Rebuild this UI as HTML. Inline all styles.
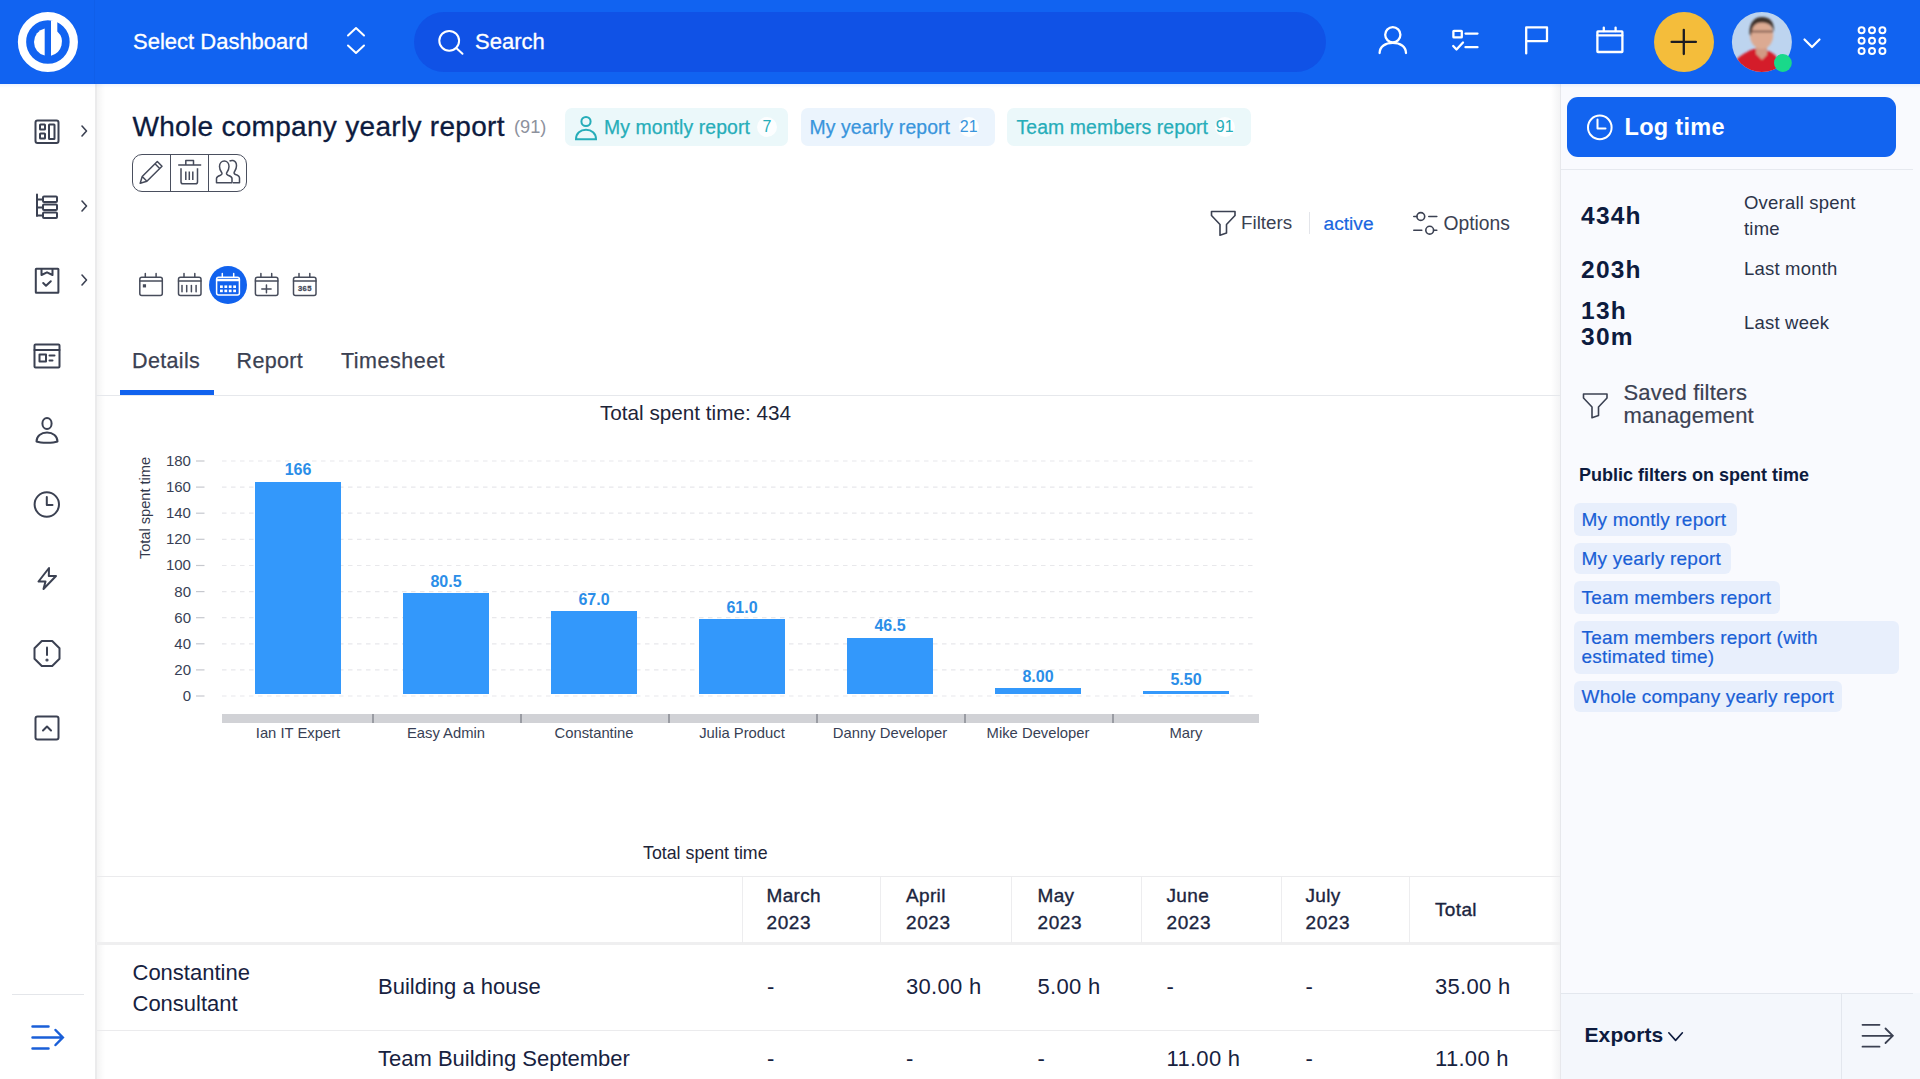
<!DOCTYPE html>
<html><head><meta charset="utf-8"><style>
html,body{margin:0;padding:0;width:1920px;height:1079px;overflow:hidden;background:#fff;}
body{position:relative;font-family:"Liberation Sans", sans-serif;}
.t{position:absolute;white-space:nowrap;}
.r{position:absolute;}
</style></head><body>
<div class="r" style="left:0px;top:0px;width:1920px;height:1079px;background:#ffffff;"></div>
<div class="r" style="left:1561px;top:84px;width:359px;height:995px;background:#f9fafe;"></div>
<div class="r" style="left:1559.5px;top:84px;width:1.5px;height:995px;background:#e7e8ec;"></div>
<div class="r" style="left:1551px;top:84px;width:8.5px;height:995px;background:linear-gradient(to right, rgba(0,0,0,0), rgba(20,30,60,0.05));"></div>
<div class="r" style="left:95px;top:84px;width:2px;height:995px;background:#ebebec;"></div>
<div class="r" style="left:97px;top:84px;width:8px;height:995px;background:linear-gradient(to right, rgba(0,0,0,0.045), rgba(0,0,0,0));"></div>
<div class="r" style="left:0px;top:84px;width:1920px;height:4px;background:linear-gradient(rgba(17,99,241,0.07), rgba(17,99,241,0));"></div>
<div class="r" style="left:0px;top:0px;width:1920px;height:84px;background:#1163f1;"></div>
<div class="r" style="left:94px;top:0px;width:1px;height:84px;background:rgba(0,0,0,0.03);"></div>
<svg class="r" style="left:0px;top:0px;" width="95" height="84" viewBox="0 0 95 84" fill="none">
<circle cx="47.9" cy="42" r="25.9" stroke="#fff" stroke-width="8.3"/>
<path d="M44.7 28.4 A14 14 0 0 0 44.7 55.6 Z" fill="#fff"/>
<path d="M51 20.5 H57.3 V31.6 A14 14 0 0 1 51 55.65 Z" fill="#fff"/>
</svg>
<div class="t" style="left:133.0px;top:31.3px;font-size:22px;line-height:22px;color:#ffffff;font-weight:normal;-webkit-text-stroke:0.3px #ffffff;">Select Dashboard</div>
<svg class="r" style="left:340px;top:20px;" width="32" height="40" viewBox="0 0 32 40" fill="none">
<path d="M348 35.5 L356 28 L364 35.5" transform="translate(-340,-20)" stroke="#fff" stroke-width="2" stroke-linecap="round" stroke-linejoin="round"/>
<path d="M348 45.5 L356 53 L364 45.5" transform="translate(-340,-20)" stroke="#fff" stroke-width="2" stroke-linecap="round" stroke-linejoin="round"/>
</svg>
<div class="r" style="left:414px;top:12px;width:912px;height:60px;background:#1052e6;border-radius:30px;"></div>
<svg class="r" style="left:430px;top:20px;" width="45" height="45" viewBox="0 0 45 45" fill="none">
<g transform="translate(-430,-20)">
<circle cx="449.2" cy="40.8" r="9.9" stroke="#fff" stroke-width="2"/>
<path d="M456.5 48.2 L462.5 53.8" stroke="#fff" stroke-width="2" stroke-linecap="round"/>
</g></svg>
<div class="t" style="left:475.0px;top:31.3px;font-size:22px;line-height:22px;color:#ffffff;font-weight:normal;-webkit-text-stroke:0.3px #ffffff;">Search</div>
<svg class="r" style="left:1370px;top:15px;" width="270" height="55" viewBox="0 0 270 55" fill="none">
<g transform="translate(-1370,-15)" stroke="#fff" stroke-width="2.3" fill="none" stroke-linecap="round" stroke-linejoin="round">
<circle cx="1392.8" cy="34.8" r="7.6"/>
<path d="M1379.6 53 C1379.6 46.5 1385.5 42.8 1392.8 42.8 C1400.1 42.8 1406 46.5 1406 53"/>
<rect x="1453.4" y="30.8" width="8.4" height="6.6" rx="0.5"/>
<path d="M1465.5 33.6 H1477.5 M1465.5 47.2 H1477.5 M1453.2 46 L1456.5 49.5 L1463 42.5"/>
<path d="M1526.2 53.4 V27.4 H1547 V41.2 H1526.2"/>
<rect x="1597.4" y="31.4" width="25" height="20.6" rx="0.5"/>
<path d="M1597.6 35.4 H1622.2 M1603.8 27.6 V31 M1615.6 27.6 V31"/>
</g></svg>
<div class="r" style="left:1653.8px;top:11.9px;width:60px;height:60px;border-radius:50%;background:#f4bd3b;"></div>
<svg class="r" style="left:1660px;top:18px;" width="48" height="48" viewBox="0 0 48 48" fill="none">
<g transform="translate(-1660,-18)" stroke="#1b1b22" stroke-width="2.3" stroke-linecap="round">
<path d="M1683.8 29.8 V54 M1671.6 41.9 H1695.9"/>
</g></svg>
<svg class="r" style="left:1725px;top:5px;" width="75" height="75" viewBox="0 0 75 75" fill="none"><defs><clipPath id="avc"><circle cx="36.9" cy="37" r="30"/></clipPath><filter id="avb" x="-20%" y="-20%" width="140%" height="140%"><feGaussianBlur stdDeviation="1.1"/></filter></defs>
<circle cx="36.9" cy="37" r="30" fill="#bdd4ef"/>
<g clip-path="url(#avc)"><g filter="url(#avb)">
<path d="M8 75 L12 54 C18 48 27 44 33 43 L41 45 C46 47 50 49 52 53 L54 75 Z" fill="#d41a2a"/>
<path d="M31 40 H42 V50 L37 55 L31 49 Z" fill="#d29a84"/>
<ellipse cx="36.6" cy="30" rx="11.6" ry="14" fill="#dcaa92"/>
<path d="M24.5 29 C24 18 29 12 37 12 C45 12 49.5 17 49 27 C47 21 44 17.5 37 17.5 C30 17.5 27 21 26 31 Z" fill="#3d302a"/>
<path d="M26 26.5 H48" stroke="#6b4a40" stroke-width="1.6"/>
</g></g>
<circle cx="57.9" cy="58" r="8.9" fill="#19d98a"/></svg>
<svg class="r" style="left:1800px;top:30px;" width="26" height="26" viewBox="0 0 26 26" fill="none"><path d="M4.5 9.5 L12 17 L19.5 9.5" stroke="#fff" stroke-width="2.2" stroke-linecap="round" stroke-linejoin="round"/></svg>
<svg class="r" style="left:1850px;top:20px;" width="45" height="45" viewBox="0 0 45 45" fill="none"><circle cx="11.6" cy="10.3" r="3.0" stroke="#fff" stroke-width="2.0"/><circle cx="22.0" cy="10.3" r="3.0" stroke="#fff" stroke-width="2.0"/><circle cx="32.4" cy="10.3" r="3.0" stroke="#fff" stroke-width="2.0"/><circle cx="11.6" cy="20.7" r="3.0" stroke="#fff" stroke-width="2.0"/><circle cx="22.0" cy="20.7" r="3.0" stroke="#fff" stroke-width="2.0"/><circle cx="32.4" cy="20.7" r="3.0" stroke="#fff" stroke-width="2.0"/><circle cx="11.6" cy="31.1" r="3.0" stroke="#fff" stroke-width="2.0"/><circle cx="22.0" cy="31.1" r="3.0" stroke="#fff" stroke-width="2.0"/><circle cx="32.4" cy="31.1" r="3.0" stroke="#fff" stroke-width="2.0"/></svg>
<svg class="r" style="left:0px;top:84px;" width="95" height="995" viewBox="0 0 95 995" fill="none"><g transform="translate(0,-84)"><g stroke="#3b4152" stroke-width="2" fill="none" stroke-linecap="round" stroke-linejoin="round"><rect x="35.5" y="120.5" width="23" height="22.5" rx="2"/><rect x="40" y="124.5" width="5" height="5" rx="0.5"/><rect x="40" y="133.5" width="5" height="5" rx="0.5"/><rect x="49" y="124.5" width="5.5" height="14.5" rx="0.5"/><path d="M37 194.5 V216 M37 199.5 H43 M37 207.5 H43 M37 215.5 H43"/><rect x="43" y="196.5" width="14" height="5.5" rx="1"/><rect x="43" y="204.5" width="14" height="5.5" rx="1"/><rect x="43" y="212.5" width="14" height="5.5" rx="1"/><rect x="35.8" y="268.8" width="22.6" height="24" rx="0.5"/><path d="M41.5 269 V275 L47 272.3 L52.5 275 V269"/><path d="M43.2 283 L46 285.8 L50.8 281.2"/><rect x="34.5" y="344.5" width="25" height="23" rx="1"/><path d="M34.5 350 H59.5"/><rect x="39.5" y="354.5" width="6.5" height="7"/><path d="M49.5 355.5 H54.5 M49.5 360.5 H52.5"/><ellipse cx="47" cy="423.5" rx="4.6" ry="5.5"/><path d="M36.5 441.5 C36.5 436 41 432.5 47 432.5 C53 432.5 57.5 436 57.5 441.5 C53 443.2 41 443.2 36.5 441.5 Z"/><circle cx="46.8" cy="504.5" r="12.2"/><path d="M46.8 497 V505 H52.5"/><path d="M49 568 L38.5 581.5 H45.5 L43.5 589 L56 576 H48.8 Z"/><path d="M41.8 641 H52.2 L59.5 648.3 V658.7 L52.2 666 H41.8 L34.5 658.7 V648.3 Z"/><path d="M47 647.5 V655"/><circle cx="47" cy="660" r="0.6" fill="#3b4152"/><rect x="35.5" y="716.5" width="23" height="23" rx="2"/><path d="M43 730.5 L47 726.5 L51 730.5"/><path d="M82 126 L86.5 131 L82 136" stroke-width="1.6"/><path d="M82 201 L86.5 206 L82 211" stroke-width="1.6"/><path d="M82 275 L86.5 280 L82 285" stroke-width="1.6"/></g></g></svg>
<div class="r" style="left:12px;top:994px;width:72px;height:1px;background:#e4e6ea;"></div>
<svg class="r" style="left:25px;top:1015px;" width="45" height="45" viewBox="0 0 45 45" fill="none"><g transform="translate(-25,-1015)" stroke="#1a5fd8" stroke-width="2.5" stroke-linecap="round" fill="none"><path d="M32.5 1026.5 H48.5 M32.5 1048.5 H48.5 M32.5 1037.5 H62.5 M55.5 1030 L62.8 1037.5 L55.5 1045"/></g></svg>
<div class="t" style="left:132.5px;top:112.8px;font-size:28px;line-height:28px;color:#0d1b3e;font-weight:normal;letter-spacing:0.3px;-webkit-text-stroke:0.3px #0d1b3e;">Whole company yearly report</div>
<div class="t" style="left:514.0px;top:117.5px;font-size:18.2px;line-height:18.2px;color:#8d919d;font-weight:normal;">(91)</div>
<div class="r" style="left:565px;top:108px;width:223px;height:38px;background:#ebf8fa;border-radius:7px;"></div>
<div class="t" style="left:604.0px;top:117.5px;font-size:19.4px;line-height:19.4px;color:#26adb9;font-weight:normal;letter-spacing:0.1px;-webkit-text-stroke:0.25px #26adb9;">My montly report</div>
<div class="r" style="left:757px;top:117px;width:20px;height:20px;border-radius:10px;background:#fff;opacity:.85"></div>
<div class="t" style="left:762.4px;top:119.4px;font-size:16px;line-height:16px;color:#26adb9;font-weight:normal;">7</div>
<svg class="r" style="left:572px;top:112px;" width="30" height="30" viewBox="0 0 30 30" fill="none"><g transform="translate(-572,-112)" stroke="#26adb9" stroke-width="2" fill="none" stroke-linecap="round"><circle cx="586" cy="121.5" r="4.6"/><path d="M576 139.2 C576 133 580.5 129.8 586 129.8 C591.5 129.8 596 133 596 139.2 Z"/></g></svg>
<div class="r" style="left:801px;top:108px;width:194px;height:38px;background:#ebf4fd;border-radius:7px;"></div>
<div class="t" style="left:809.5px;top:117.5px;font-size:19.4px;line-height:19.4px;color:#3995dc;font-weight:normal;letter-spacing:0.1px;-webkit-text-stroke:0.25px #3995dc;">My yearly report</div>
<div class="r" style="left:959px;top:117px;width:20px;height:20px;border-radius:10px;background:#fff;opacity:.85"></div>
<div class="t" style="left:959.8px;top:119.4px;font-size:16px;line-height:16px;color:#3995dc;font-weight:normal;">21</div>
<div class="r" style="left:1007px;top:108px;width:244px;height:38px;background:#ebf8fa;border-radius:7px;"></div>
<div class="t" style="left:1016.5px;top:117.5px;font-size:19.4px;line-height:19.4px;color:#26adb9;font-weight:normal;letter-spacing:0.1px;-webkit-text-stroke:0.25px #26adb9;">Team members report</div>
<div class="r" style="left:1215px;top:117px;width:20px;height:20px;border-radius:10px;background:#fff;opacity:.85"></div>
<div class="t" style="left:1215.8px;top:119.4px;font-size:16px;line-height:16px;color:#26adb9;font-weight:normal;">91</div>
<div class="r" style="left:132px;top:154px;width:113px;height:36px;border:1.4px solid #4a4f5e;border-radius:10px;"></div>
<div class="r" style="left:169.5px;top:154px;width:1.4px;height:38px;background:#4a4f5e;"></div>
<div class="r" style="left:208px;top:154px;width:1.4px;height:38px;background:#4a4f5e;"></div>
<svg class="r" style="left:130px;top:150px;" width="120" height="45" viewBox="0 0 120 45" fill="none"><g transform="translate(-130,-150)" stroke="#454a5a" stroke-width="1.5" fill="none" stroke-linejoin="round"><path d="M140.2 183.3 L142.2 176.5 L157.3 161.5 L162 166.2 L146.9 181.2 Z M142.2 176.5 L146.9 181.2 M155 163.8 L159.7 168.5"/><path d="M178.2 165 H201.2 M185.8 165 V160.6 H193.5 V165 M181 168.2 V182 C181 183.2 181.8 183.8 183 183.8 H195.5 C196.8 183.8 197.5 183.2 197.5 182 V168.2 M185.8 171.5 V180 M189.3 171.5 V180 M192.8 171.5 V180"/><path d="M216.5 182.8 V178.5 C216.5 176.8 218 176 220.5 175.2 C222 174.5 222.5 173.8 221.5 172.2 C220.3 170.5 219.5 168.5 219.5 166.5 C219.5 163 221.8 161 224.3 161 C226.8 161 229 163 229 166.5 C229 168.5 228.2 170.5 227 172.2 C226 173.8 226.5 174.5 228 175.2 C230.5 176 232 176.8 232 178.5 V182.8 Z"/><path d="M229.5 161 C231 160.3 232 160.3 233 160.5 C235.2 161 236.5 163 236.5 165.8 C236.5 167.8 235.8 169.8 234.6 171.5 C233.6 173 234 173.8 235.5 174.5 C238 175.3 239.5 176.2 239.5 178 V182.8 H233"/></g></svg>
<svg class="r" style="left:1205px;top:205px;" width="40" height="35" viewBox="0 0 40 35" fill="none"><g transform="translate(-1205,-205)" stroke="#3b4152" stroke-width="1.6" fill="none" stroke-linejoin="round"><path d="M1211.5 211.5 H1235 V215.5 L1226.5 224.5 V233 L1220 235.2 V224.5 L1211.5 215.5 Z"/></g></svg>
<div class="t" style="left:1241.0px;top:214.3px;font-size:18.8px;line-height:18.8px;color:#3b4152;font-weight:normal;">Filters</div>
<div class="r" style="left:1309px;top:212px;width:1.2px;height:22px;background:#e3e5ea;"></div>
<div class="t" style="left:1323.5px;top:214.0px;font-size:19.2px;line-height:19.2px;color:#1a66e0;font-weight:normal;-webkit-text-stroke:0.2px #1a66e0;">active</div>
<svg class="r" style="left:1405px;top:205px;" width="40" height="35" viewBox="0 0 40 35" fill="none"><g transform="translate(-1405,-205)" stroke="#3b4152" stroke-width="1.6" fill="none" stroke-linecap="round"><circle cx="1420.8" cy="216.5" r="3.9"/><path d="M1413.8 216.5 H1416.9 M1428.8 216.5 H1436.8"/><circle cx="1429.7" cy="230.2" r="3.9"/><path d="M1413.8 230.2 H1421.8 M1433.6 230.2 H1436.8"/></g></svg>
<div class="t" style="left:1443.5px;top:213.9px;font-size:19.3px;line-height:19.3px;color:#3b4152;font-weight:normal;">Options</div>
<div class="r" style="left:209.2px;top:266.3px;width:38px;height:38px;border-radius:50%;background:#1162ee;"></div>
<svg class="r" style="left:0px;top:0px;" width="330" height="310" viewBox="0 0 330 310" fill="none"><g stroke="#474c5b" stroke-width="1.5" fill="none" stroke-linecap="round"><rect x="139.8" y="277.3" width="22.5" height="18.1" rx="2"/><path d="M139.8 280.9 H162.3 M145.3 273.6 V277 M156.1 273.6 V277"/><rect x="143.6" y="285" width="1.7" height="1.7" fill="#474c5b"/></g><g stroke="#474c5b" stroke-width="1.5" fill="none" stroke-linecap="round"><rect x="178.5" y="277.3" width="22.5" height="18.1" rx="2"/><path d="M178.5 280.9 H201.0 M184.0 273.6 V277 M194.79999999999998 273.6 V277"/><path d="M182.0 285.5 V291.8"/><path d="M186.7 285.5 V291.8"/><path d="M191.4 285.5 V291.8"/><path d="M196.1 285.5 V291.8"/></g><g stroke="#474c5b" stroke-width="1.5" fill="none" stroke-linecap="round"><rect x="255.4" y="277.3" width="22.5" height="18.1" rx="2"/><path d="M255.4 280.9 H277.9 M260.9 273.6 V277 M271.7 273.6 V277"/><path d="M261.8 288.9 H271.1 M266.45 285 V292.8"/></g><g stroke="#474c5b" stroke-width="1.5" fill="none" stroke-linecap="round"><rect x="293.5" y="277.3" width="22.5" height="18.1" rx="2"/><path d="M293.5 280.9 H316.0 M299.0 273.6 V277 M309.8 273.6 V277"/><text x="304.9" y="291.4" font-family="Liberation Sans" font-weight="bold" font-size="7.6" letter-spacing="0.4" fill="#474c5b" stroke="#474c5b" stroke-width="0.3" text-anchor="middle">365</text></g><g stroke="#fff" stroke-width="1.5" fill="none" stroke-linecap="round"><rect x="216.6" y="277.3" width="22.8" height="17.6" rx="2"/><path d="M216.6 279.6 H239.4 M216.6 280.6 H239.4 M222.3 273.6 V277 M233.7 273.6 V277"/></g><rect x="220.0" y="285.4" width="2.8" height="2.6" fill="#fff"/><rect x="220.0" y="289.6" width="2.8" height="2.6" fill="#fff"/><rect x="224.4" y="285.4" width="2.8" height="2.6" fill="#fff"/><rect x="224.4" y="289.6" width="2.8" height="2.6" fill="#fff"/><rect x="228.8" y="285.4" width="2.8" height="2.6" fill="#fff"/><rect x="228.8" y="289.6" width="2.8" height="2.6" fill="#fff"/><rect x="233.2" y="285.4" width="2.8" height="2.6" fill="#fff"/><rect x="233.2" y="289.6" width="2.8" height="2.6" fill="#fff"/></svg>
<div class="t" style="left:132.0px;top:351.0px;font-size:21.5px;line-height:21.5px;color:#3b4152;font-weight:normal;letter-spacing:0.35px;-webkit-text-stroke:0.25px #3b4152;">Details</div>
<div class="t" style="left:236.5px;top:351.0px;font-size:21.5px;line-height:21.5px;color:#3b4152;font-weight:normal;letter-spacing:0.35px;-webkit-text-stroke:0.25px #3b4152;">Report</div>
<div class="t" style="left:341.0px;top:351.0px;font-size:21.5px;line-height:21.5px;color:#3b4152;font-weight:normal;letter-spacing:0.5px;-webkit-text-stroke:0.25px #3b4152;">Timesheet</div>
<div class="r" style="left:96px;top:394.5px;width:1464px;height:1.3px;background:#e6e8ec;"></div>
<div class="r" style="left:120px;top:390px;width:93.5px;height:4.5px;background:#1162ee;"></div>
<div class="t" style="left:600.0px;top:402.6px;font-size:20.7px;line-height:20.7px;color:#1d2438;font-weight:normal;">Total spent time: 434</div>
<div class="t" style="left:144.5px;top:508px;transform:translate(-50%,-50%) rotate(-90deg);font-size:14.6px;line-height:15px;color:#333a4d;">Total spent time</div>
<div class="t" style="left:182.7px;top:688.0px;font-size:15px;line-height:15px;color:#383f55;font-weight:normal;">0</div>
<div class="t" style="left:174.3px;top:661.8px;font-size:15px;line-height:15px;color:#383f55;font-weight:normal;">20</div>
<div class="t" style="left:174.3px;top:635.7px;font-size:15px;line-height:15px;color:#383f55;font-weight:normal;">40</div>
<div class="t" style="left:174.3px;top:609.6px;font-size:15px;line-height:15px;color:#383f55;font-weight:normal;">60</div>
<div class="t" style="left:174.3px;top:583.5px;font-size:15px;line-height:15px;color:#383f55;font-weight:normal;">80</div>
<div class="t" style="left:165.9px;top:557.4px;font-size:15px;line-height:15px;color:#383f55;font-weight:normal;">100</div>
<div class="t" style="left:165.9px;top:531.3px;font-size:15px;line-height:15px;color:#383f55;font-weight:normal;">120</div>
<div class="t" style="left:165.9px;top:505.2px;font-size:15px;line-height:15px;color:#383f55;font-weight:normal;">140</div>
<div class="t" style="left:165.9px;top:479.1px;font-size:15px;line-height:15px;color:#383f55;font-weight:normal;">160</div>
<div class="t" style="left:165.9px;top:453.0px;font-size:15px;line-height:15px;color:#383f55;font-weight:normal;">180</div>
<svg class="r" style="left:0px;top:0px;" width="1300" height="760" viewBox="0 0 1300 760" fill="none"><path d="M196 696.0 H204.5" stroke="#c6c8ce" stroke-width="1.2"/><path d="M222 696.0 H1256" stroke="#e8e8eb" stroke-width="1.2" stroke-dasharray="4.5 4.5"/><path d="M196 669.9 H204.5" stroke="#c6c8ce" stroke-width="1.2"/><path d="M222 669.9 H1256" stroke="#e8e8eb" stroke-width="1.2" stroke-dasharray="4.5 4.5"/><path d="M196 643.8 H204.5" stroke="#c6c8ce" stroke-width="1.2"/><path d="M222 643.8 H1256" stroke="#e8e8eb" stroke-width="1.2" stroke-dasharray="4.5 4.5"/><path d="M196 617.7 H204.5" stroke="#c6c8ce" stroke-width="1.2"/><path d="M222 617.7 H1256" stroke="#e8e8eb" stroke-width="1.2" stroke-dasharray="4.5 4.5"/><path d="M196 591.6 H204.5" stroke="#c6c8ce" stroke-width="1.2"/><path d="M222 591.6 H1256" stroke="#e8e8eb" stroke-width="1.2" stroke-dasharray="4.5 4.5"/><path d="M196 565.5 H204.5" stroke="#c6c8ce" stroke-width="1.2"/><path d="M222 565.5 H1256" stroke="#e8e8eb" stroke-width="1.2" stroke-dasharray="4.5 4.5"/><path d="M196 539.3 H204.5" stroke="#c6c8ce" stroke-width="1.2"/><path d="M222 539.3 H1256" stroke="#e8e8eb" stroke-width="1.2" stroke-dasharray="4.5 4.5"/><path d="M196 513.2 H204.5" stroke="#c6c8ce" stroke-width="1.2"/><path d="M222 513.2 H1256" stroke="#e8e8eb" stroke-width="1.2" stroke-dasharray="4.5 4.5"/><path d="M196 487.1 H204.5" stroke="#c6c8ce" stroke-width="1.2"/><path d="M222 487.1 H1256" stroke="#e8e8eb" stroke-width="1.2" stroke-dasharray="4.5 4.5"/><path d="M196 461.0 H204.5" stroke="#c6c8ce" stroke-width="1.2"/><path d="M222 461.0 H1256" stroke="#e8e8eb" stroke-width="1.2" stroke-dasharray="4.5 4.5"/></svg>
<div class="r" style="left:222px;top:714.2px;width:1037px;height:9px;background:#d1d2d6;"></div>
<div class="r" style="left:372.20000000000005px;top:714.2px;width:1.5px;height:9.3px;background:#9a9ca3;"></div>
<div class="r" style="left:520.2px;top:714.2px;width:1.5px;height:9.3px;background:#9a9ca3;"></div>
<div class="r" style="left:668.2px;top:714.2px;width:1.5px;height:9.3px;background:#9a9ca3;"></div>
<div class="r" style="left:816.2px;top:714.2px;width:1.5px;height:9.3px;background:#9a9ca3;"></div>
<div class="r" style="left:964.2px;top:714.2px;width:1.5px;height:9.3px;background:#9a9ca3;"></div>
<div class="r" style="left:1112.1999999999998px;top:714.2px;width:1.5px;height:9.3px;background:#9a9ca3;"></div>
<div class="r" style="left:255.2px;top:481.8px;width:85.5px;height:212.2px;background:#3398fb;"></div>
<div class="t" style="left:238.0px;width:120px;text-align:center;top:725.8px;font-size:14.8px;line-height:14.8px;color:#383f55;">Ian IT Expert</div>
<div class="t" style="left:238.0px;width:120px;text-align:center;top:462.4px;font-size:16px;line-height:16px;font-weight:bold;color:#2b8ee8;">166</div>
<div class="r" style="left:403.2px;top:593.4px;width:85.5px;height:100.6px;background:#3398fb;"></div>
<div class="t" style="left:386.0px;width:120px;text-align:center;top:725.8px;font-size:14.8px;line-height:14.8px;color:#383f55;">Easy Admin</div>
<div class="t" style="left:386.0px;width:120px;text-align:center;top:574.0px;font-size:16px;line-height:16px;font-weight:bold;color:#2b8ee8;">80.5</div>
<div class="r" style="left:551.2px;top:611.0px;width:85.5px;height:83.0px;background:#3398fb;"></div>
<div class="t" style="left:534.0px;width:120px;text-align:center;top:725.8px;font-size:14.8px;line-height:14.8px;color:#383f55;">Constantine</div>
<div class="t" style="left:534.0px;width:120px;text-align:center;top:591.6px;font-size:16px;line-height:16px;font-weight:bold;color:#2b8ee8;">67.0</div>
<div class="r" style="left:699.2px;top:618.9px;width:85.5px;height:75.1px;background:#3398fb;"></div>
<div class="t" style="left:682.0px;width:120px;text-align:center;top:725.8px;font-size:14.8px;line-height:14.8px;color:#383f55;">Julia Product</div>
<div class="t" style="left:682.0px;width:120px;text-align:center;top:599.5px;font-size:16px;line-height:16px;font-weight:bold;color:#2b8ee8;">61.0</div>
<div class="r" style="left:847.2px;top:637.8px;width:85.5px;height:56.2px;background:#3398fb;"></div>
<div class="t" style="left:830.0px;width:120px;text-align:center;top:725.8px;font-size:14.8px;line-height:14.8px;color:#383f55;">Danny Developer</div>
<div class="t" style="left:830.0px;width:120px;text-align:center;top:618.4px;font-size:16px;line-height:16px;font-weight:bold;color:#2b8ee8;">46.5</div>
<div class="r" style="left:995.2px;top:688.1px;width:85.5px;height:5.9px;background:#3398fb;"></div>
<div class="t" style="left:978.0px;width:120px;text-align:center;top:725.8px;font-size:14.8px;line-height:14.8px;color:#383f55;">Mike Developer</div>
<div class="t" style="left:978.0px;width:120px;text-align:center;top:668.7px;font-size:16px;line-height:16px;font-weight:bold;color:#2b8ee8;">8.00</div>
<div class="r" style="left:1143.2px;top:691.3px;width:85.5px;height:2.7px;background:#3398fb;"></div>
<div class="t" style="left:1126.0px;width:120px;text-align:center;top:725.8px;font-size:14.8px;line-height:14.8px;color:#383f55;">Mary</div>
<div class="t" style="left:1126.0px;width:120px;text-align:center;top:671.9px;font-size:16px;line-height:16px;font-weight:bold;color:#2b8ee8;">5.50</div>
<div class="t" style="left:643.0px;top:844.5px;font-size:17.8px;line-height:17.8px;color:#1d2438;font-weight:normal;">Total spent time</div>
<div class="r" style="left:96px;top:876px;width:1464px;height:1.2px;background:#ebebed;"></div>
<div class="r" style="left:96px;top:942px;width:1464px;height:2.5px;background:#efeff0;"></div>
<div class="r" style="left:742px;top:877px;width:1.2px;height:66px;background:#ededef;"></div>
<div class="r" style="left:880px;top:877px;width:1.2px;height:66px;background:#ededef;"></div>
<div class="r" style="left:1011px;top:877px;width:1.2px;height:66px;background:#ededef;"></div>
<div class="r" style="left:1141px;top:877px;width:1.2px;height:66px;background:#ededef;"></div>
<div class="r" style="left:1281px;top:877px;width:1.2px;height:66px;background:#ededef;"></div>
<div class="r" style="left:1409px;top:877px;width:1.2px;height:66px;background:#ededef;"></div>
<div class="t" style="left:766.5px;top:886.1px;font-size:19px;line-height:19px;color:#1b2540;font-weight:normal;letter-spacing:0.35px;-webkit-text-stroke:0.35px #1b2540;">March</div>
<div class="t" style="left:766.5px;top:912.8px;font-size:19px;line-height:19px;color:#1b2540;font-weight:normal;letter-spacing:0.6px;-webkit-text-stroke:0.35px #1b2540;">2023</div>
<div class="t" style="left:906.0px;top:886.1px;font-size:19px;line-height:19px;color:#1b2540;font-weight:normal;letter-spacing:0.35px;-webkit-text-stroke:0.35px #1b2540;">April</div>
<div class="t" style="left:906.0px;top:912.8px;font-size:19px;line-height:19px;color:#1b2540;font-weight:normal;letter-spacing:0.6px;-webkit-text-stroke:0.35px #1b2540;">2023</div>
<div class="t" style="left:1037.5px;top:886.1px;font-size:19px;line-height:19px;color:#1b2540;font-weight:normal;letter-spacing:0.35px;-webkit-text-stroke:0.35px #1b2540;">May</div>
<div class="t" style="left:1037.5px;top:912.8px;font-size:19px;line-height:19px;color:#1b2540;font-weight:normal;letter-spacing:0.6px;-webkit-text-stroke:0.35px #1b2540;">2023</div>
<div class="t" style="left:1166.5px;top:886.1px;font-size:19px;line-height:19px;color:#1b2540;font-weight:normal;letter-spacing:0.35px;-webkit-text-stroke:0.35px #1b2540;">June</div>
<div class="t" style="left:1166.5px;top:912.8px;font-size:19px;line-height:19px;color:#1b2540;font-weight:normal;letter-spacing:0.6px;-webkit-text-stroke:0.35px #1b2540;">2023</div>
<div class="t" style="left:1305.5px;top:886.1px;font-size:19px;line-height:19px;color:#1b2540;font-weight:normal;letter-spacing:0.35px;-webkit-text-stroke:0.35px #1b2540;">July</div>
<div class="t" style="left:1305.5px;top:912.8px;font-size:19px;line-height:19px;color:#1b2540;font-weight:normal;letter-spacing:0.6px;-webkit-text-stroke:0.35px #1b2540;">2023</div>
<div class="t" style="left:1435.0px;top:900.1px;font-size:19px;line-height:19px;color:#1b2540;font-weight:normal;letter-spacing:0.35px;-webkit-text-stroke:0.35px #1b2540;">Total</div>
<div class="t" style="left:132.5px;top:961.6px;font-size:22px;line-height:22px;color:#17223f;font-weight:normal;">Constantine</div>
<div class="t" style="left:132.5px;top:992.5px;font-size:22px;line-height:22px;color:#17223f;font-weight:normal;">Consultant</div>
<div class="t" style="left:378.0px;top:975.7px;font-size:22px;line-height:22px;color:#17223f;font-weight:normal;">Building a house</div>
<div class="t" style="left:767.0px;top:975.9px;font-size:22px;line-height:22px;color:#17223f;font-weight:normal;letter-spacing:0.3px;">-</div>
<div class="t" style="left:906.0px;top:975.9px;font-size:22px;line-height:22px;color:#17223f;font-weight:normal;letter-spacing:0.3px;">30.00 h</div>
<div class="t" style="left:1037.5px;top:975.9px;font-size:22px;line-height:22px;color:#17223f;font-weight:normal;letter-spacing:0.3px;">5.00 h</div>
<div class="t" style="left:1166.5px;top:975.9px;font-size:22px;line-height:22px;color:#17223f;font-weight:normal;letter-spacing:0.3px;">-</div>
<div class="t" style="left:1305.5px;top:975.9px;font-size:22px;line-height:22px;color:#17223f;font-weight:normal;letter-spacing:0.3px;">-</div>
<div class="t" style="left:1435.0px;top:975.9px;font-size:22px;line-height:22px;color:#17223f;font-weight:normal;letter-spacing:0.3px;">35.00 h</div>
<div class="r" style="left:96px;top:1030px;width:1464px;height:1.3px;background:#ebebed;"></div>
<div class="t" style="left:378.0px;top:1047.7px;font-size:22px;line-height:22px;color:#17223f;font-weight:normal;">Team Building September</div>
<div class="t" style="left:767.0px;top:1047.9px;font-size:22px;line-height:22px;color:#17223f;font-weight:normal;letter-spacing:0.3px;">-</div>
<div class="t" style="left:906.0px;top:1047.9px;font-size:22px;line-height:22px;color:#17223f;font-weight:normal;letter-spacing:0.3px;">-</div>
<div class="t" style="left:1037.5px;top:1047.9px;font-size:22px;line-height:22px;color:#17223f;font-weight:normal;letter-spacing:0.3px;">-</div>
<div class="t" style="left:1166.5px;top:1047.9px;font-size:22px;line-height:22px;color:#17223f;font-weight:normal;letter-spacing:0.3px;">11.00 h</div>
<div class="t" style="left:1305.5px;top:1047.9px;font-size:22px;line-height:22px;color:#17223f;font-weight:normal;letter-spacing:0.3px;">-</div>
<div class="t" style="left:1435.0px;top:1047.9px;font-size:22px;line-height:22px;color:#17223f;font-weight:normal;letter-spacing:0.3px;">11.00 h</div>
<div class="r" style="left:1567px;top:97px;width:329px;height:60px;background:#1264f0;border-radius:11px;"></div>
<svg class="r" style="left:1580px;top:110px;" width="40" height="36" viewBox="0 0 40 36" fill="none"><g transform="translate(-1580,-110)" stroke="#fff" stroke-width="2" fill="none" stroke-linecap="round" stroke-linejoin="round"><circle cx="1599.8" cy="127.4" r="11.8"/><path d="M1597.5 119.5 V128.5 H1605.5"/></g></svg>
<div class="t" style="left:1624.5px;top:115.6px;font-size:23.5px;line-height:23.5px;color:#ffffff;font-weight:bold;letter-spacing:0.3px;">Log time</div>
<div class="r" style="left:1561px;top:168.5px;width:352px;height:1.2px;background:#e6e9ef;"></div>
<div class="t" style="left:1581.1px;top:204.4px;font-size:24.5px;line-height:24.5px;color:#0d1b3e;font-weight:bold;letter-spacing:1.2px;">434h</div>
<div class="t" style="left:1744.0px;top:193.5px;font-size:18.5px;line-height:18.5px;color:#2b3349;font-weight:normal;letter-spacing:0.2px;">Overall spent</div>
<div class="t" style="left:1744.0px;top:219.9px;font-size:18.5px;line-height:18.5px;color:#2b3349;font-weight:normal;letter-spacing:0.2px;">time</div>
<div class="t" style="left:1581.1px;top:258.2px;font-size:24.5px;line-height:24.5px;color:#0d1b3e;font-weight:bold;letter-spacing:1.2px;">203h</div>
<div class="t" style="left:1744.0px;top:260.4px;font-size:18.5px;line-height:18.5px;color:#2b3349;font-weight:normal;letter-spacing:0.2px;">Last month</div>
<div class="t" style="left:1581.1px;top:299.4px;font-size:24.5px;line-height:24.5px;color:#0d1b3e;font-weight:bold;letter-spacing:1.2px;">13h</div>
<div class="t" style="left:1581.1px;top:324.8px;font-size:24.5px;line-height:24.5px;color:#0d1b3e;font-weight:bold;letter-spacing:1.2px;">30m</div>
<div class="t" style="left:1744.0px;top:314.3px;font-size:18.5px;line-height:18.5px;color:#2b3349;font-weight:normal;letter-spacing:0.2px;">Last week</div>
<svg class="r" style="left:1578px;top:388px;" width="36" height="36" viewBox="0 0 36 36" fill="none"><g transform="translate(-1578,-388)" stroke="#3b4152" stroke-width="1.6" fill="none" stroke-linejoin="round"><path d="M1583.5 394 H1607 V398 L1598.5 407 V415.5 L1592 417.7 V407 L1583.5 398 Z"/></g></svg>
<div class="t" style="left:1623.5px;top:381.7px;font-size:22px;line-height:22px;color:#3b4152;font-weight:normal;letter-spacing:0.2px;-webkit-text-stroke:0.2px #3b4152;">Saved filters</div>
<div class="t" style="left:1623.5px;top:404.6px;font-size:22px;line-height:22px;color:#3b4152;font-weight:normal;letter-spacing:0.2px;-webkit-text-stroke:0.2px #3b4152;">management</div>
<div class="t" style="left:1579.0px;top:465.7px;font-size:18px;line-height:18px;color:#0d1b3e;font-weight:bold;">Public filters on spent time</div>
<div class="r" style="left:1573.5px;top:502.8px;width:163.7px;height:32.8px;background:#e8effc;border-radius:6px;"></div>
<div class="t" style="left:1581.5px;top:509.6px;font-size:19px;line-height:19px;color:#1a5fd6;font-weight:normal;letter-spacing:0.2px;-webkit-text-stroke:0.2px #1a5fd6;">My montly report</div>
<div class="r" style="left:1573.5px;top:542.6px;width:157.7px;height:31.4px;background:#e8effc;border-radius:6px;"></div>
<div class="t" style="left:1581.5px;top:549.4px;font-size:19px;line-height:19px;color:#1a5fd6;font-weight:normal;letter-spacing:0.2px;-webkit-text-stroke:0.2px #1a5fd6;">My yearly report</div>
<div class="r" style="left:1573.5px;top:581.3px;width:206.5px;height:32.4px;background:#e8effc;border-radius:6px;"></div>
<div class="t" style="left:1581.5px;top:587.8px;font-size:19px;line-height:19px;color:#1a5fd6;font-weight:normal;letter-spacing:0.2px;-webkit-text-stroke:0.2px #1a5fd6;">Team members report</div>
<div class="r" style="left:1573.5px;top:620.8px;width:325.5px;height:52.8px;background:#e8effc;border-radius:6px;"></div>
<div class="t" style="left:1581.5px;top:627.6px;font-size:19px;line-height:19px;color:#1a5fd6;font-weight:normal;letter-spacing:0.2px;-webkit-text-stroke:0.2px #1a5fd6;">Team members report (with</div>
<div class="t" style="left:1581.5px;top:646.9px;font-size:19px;line-height:19px;color:#1a5fd6;font-weight:normal;letter-spacing:0.2px;-webkit-text-stroke:0.2px #1a5fd6;">estimated time)</div>
<div class="r" style="left:1573.5px;top:681.3px;width:268.3px;height:31.0px;background:#e8effc;border-radius:6px;"></div>
<div class="t" style="left:1581.5px;top:687.4px;font-size:19px;line-height:19px;color:#1a5fd6;font-weight:normal;letter-spacing:0.2px;-webkit-text-stroke:0.2px #1a5fd6;">Whole company yearly report</div>
<div class="r" style="left:1561px;top:993px;width:359px;height:86px;background:#f4f7fc;"></div>
<div class="r" style="left:1561px;top:993px;width:352px;height:1.2px;background:#e3e7ee;"></div>
<div class="r" style="left:1841px;top:994px;width:1.2px;height:85px;background:#e3e7ee;"></div>
<div class="t" style="left:1584.5px;top:1024.2px;font-size:21px;line-height:21px;color:#0d1b3e;font-weight:bold;letter-spacing:0.1px;">Exports</div>
<svg class="r" style="left:1664px;top:1025px;" width="24" height="24" viewBox="0 0 24 24" fill="none"><g transform="translate(-1664,-1025)" stroke="#0d1b3e" stroke-width="1.6" fill="none" stroke-linecap="round" stroke-linejoin="round"><path d="M1668.8 1032.8 L1675.6 1040.4 L1682.4 1032.8"/></g></svg>
<svg class="r" style="left:1855px;top:1015px;" width="45" height="45" viewBox="0 0 45 45" fill="none"><g transform="translate(-1855,-1015)" stroke="#3b4152" stroke-width="1.8" stroke-linecap="round" fill="none"><path d="M1862.5 1024.8 H1879.5 M1862.5 1046.7 H1879.5 M1862.5 1035.8 H1892.5 M1885.5 1028.5 L1892.8 1035.8 L1885.5 1043"/></g></svg>
</body></html>
